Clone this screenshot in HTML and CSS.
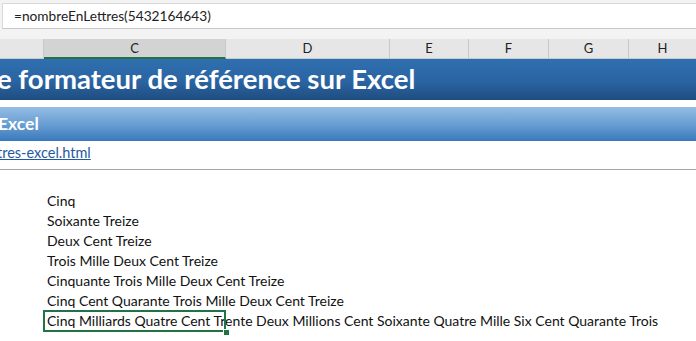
FILE: index.html
```html
<!DOCTYPE html>
<html lang="fr">
<head>
<meta charset="utf-8">
<link rel="stylesheet" href="styles.css">
</head>
<body>
<div class="topbar">
  <div class="formula">=nombreEnLettres(5432164643)</div>
</div>
<div class="headers">
  <div class="hd"></div>
  <div class="hd sel">C</div>
  <div class="hd">D</div>
  <div class="hd">E</div>
  <div class="hd">F</div>
  <div class="hd">G</div>
  <div class="hd last">H</div>
</div>
<div class="sheet">
  <div class="title">e formateur de référence sur Excel</div>
  <div class="subtitle">Excel</div>
  <div class="linkrow"><a class="link" href="#">tres-excel.html</a></div>
  <div class="rows">
    <div class="row">Cinq</div>
    <div class="row">Soixante Treize</div>
    <div class="row">Deux Cent Treize</div>
    <div class="row">Trois Mille Deux Cent Treize</div>
    <div class="row">Cinquante Trois Mille Deux Cent Treize</div>
    <div class="row">Cinq Cent Quarante Trois Mille Deux Cent Treize</div>
    <div class="row active">Cinq Milliards Quatre Cent Trente Deux Millions Cent Soixante Quatre Mille Six Cent Quarante Trois<span class="selbox"></span><span class="handle"></span></div>
  </div>
</div>
</body>
</html>
```
FILE: styles.css
```css
html, body {
  margin: 0;
  padding: 0;
  width: 696px;
  height: 341px;
  overflow: hidden;
  background: #ffffff;
  font-family: Lato, "Open Sans", sans-serif;
  color: #111;
}
.topbar {
  background: #f3f3f3;
  padding: 3px 0 10px 2px;
}
.formula {
  background: #fff;
  border-top: 1px solid #d8d8d8;
  border-bottom: 1px solid #c8c8c8;
  border-left: 1px solid #d8d8d8;
  height: 24px;
  line-height: 24px;
  padding-left: 11px;
  font-size: 13.7px;
  color: #222;
}
.headers {
  display: grid;
  grid-template-columns: 44px 182px 164px 79px 80px 80px 1fr;
  height: 19px;
  background: #e6e6e6;
  border-bottom: 1px solid #c9c9c9;
}
.hd {
  border-right: 1px solid #c9c9c9;
  text-align: center;
  font-size: 13px;
  line-height: 19px;
  color: #222;
}
.hd.sel {
  background: #d3d3d3;
  border-bottom: 2px solid #217346;
  line-height: 18px;
}
.hd.last { border-right: none; }
.sheet { position: relative; }
.title {
  height: 41px;
  background: linear-gradient(#2f6fb0, #2a64a2 55%, #1f4d80);
  color: #fff;
  font-weight: 700;
  font-size: 27.5px;
  line-height: 40px;
  margin-left: -3px;
  white-space: nowrap;
}
.subtitle {
  margin-top: 7px;
  height: 34px;
  background: linear-gradient(#93bde4, #6a9fd3 50%, #3a79bd);
  color: #fff;
  font-weight: 700;
  font-size: 17.5px;
  line-height: 34px;
  margin-left: -2px;
}
.linkrow {
  height: 28px;
  border-bottom: 1px solid #a6a6a6;
  font-size: 14.5px;
  line-height: 24px;
}
.link {
  color: #1f5aa0;
  text-decoration: underline;
  margin-left: -3px;
}
.rows {
  padding-top: 21px;
}
.row {
  position: relative;
  height: 20px;
  line-height: 20px;
  padding-left: 47px;
  font-size: 14px;
  white-space: nowrap;
  color: #111;
}
.selbox {
  position: absolute;
  left: 43px;
  top: -1px;
  width: 179px;
  height: 18px;
  border: 2px solid #217346;
}
.handle {
  position: absolute;
  left: 223px;
  top: 18px;
  width: 5px;
  height: 5px;
  background: #217346;
  border: 1px solid #fff;
}
```
